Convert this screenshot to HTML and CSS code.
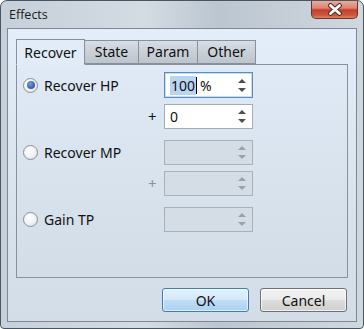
FILE: index.html
```html
<!DOCTYPE html>
<html lang="en">
<head>
  <meta charset="UTF-8">
  <title>Effects</title>
  <link rel="stylesheet" href="styles.css">
</head>
<body>
  <div class="window">
    <div class="titlebar">
      <span class="title">Effects</span>
      <div class="close-btn">
        <svg width="22" height="13" viewBox="0 0 22 13">
          <path d="M6.5 2.5 L15.5 10.5 M15.5 2.5 L6.5 10.5" stroke="#5a2a22" stroke-width="4.8" stroke-linecap="round"/>
          <path d="M6.5 2.5 L15.5 10.5 M15.5 2.5 L6.5 10.5" stroke="#ffffff" stroke-width="2.8" stroke-linecap="round"/>
        </svg>
      </div>
    </div>
    <div class="client">
      <div class="tabs">
        <div class="tab active tab-recover">Recover</div>
        <div class="tab tab-state">State</div>
        <div class="tab tab-param">Param</div>
        <div class="tab tab-other">Other</div>
      </div>
      <div class="panel">
        <div class="row">
          <label class="radio-label"><span class="radio checked"></span>Recover HP</label>
          <span class="plus"></span>
          <div class="spin focused">
            <span class="value"><span class="sel">100</span><span class="caret"></span> %</span>
            <span class="arrows"><i class="up"></i><i class="down"></i></span>
          </div>
        </div>
        <div class="row sub">
          <span class="radio-label"></span>
          <span class="plus">+</span>
          <div class="spin">
            <span class="value">0</span>
            <span class="arrows"><i class="up"></i><i class="down"></i></span>
          </div>
        </div>
        <div class="row gap">
          <label class="radio-label"><span class="radio"></span>Recover MP</label>
          <span class="plus"></span>
          <div class="spin disabled">
            <span class="value"></span>
            <span class="arrows"><i class="up"></i><i class="down"></i></span>
          </div>
        </div>
        <div class="row sub">
          <span class="radio-label"></span>
          <span class="plus dim">+</span>
          <div class="spin disabled">
            <span class="value"></span>
            <span class="arrows"><i class="up"></i><i class="down"></i></span>
          </div>
        </div>
        <div class="row gap">
          <label class="radio-label"><span class="radio"></span>Gain TP</label>
          <span class="plus"></span>
          <div class="spin disabled">
            <span class="value"></span>
            <span class="arrows"><i class="up"></i><i class="down"></i></span>
          </div>
        </div>
      </div>
      <div class="buttons">
        <button class="btn default">OK</button>
        <button class="btn">Cancel</button>
      </div>
    </div>
  </div>
</body>
</html>
```
FILE: styles.css
```css
html, body {
  margin: 0;
  padding: 0;
  background: #ffffff;
}
.window {
  box-sizing: border-box;
  width: 364px;
  height: 329px;
  border: 1px solid #4a5562;
  border-radius: 7px 7px 4px 4px;
  background: linear-gradient(90deg, #c6d0da 0%, #d3dbe3 40%, #bcc6d0 60%, #cfd7df 100%);
  display: flex;
  flex-direction: column;
  font-family: "Noto Sans", "Open Sans", sans-serif;
  color: #111;
  overflow: hidden;
}
.titlebar {
  height: 27px;
  display: flex;
  align-items: flex-start;
  justify-content: space-between;
}
.title {
  font-family: "Open Sans", "Noto Sans", sans-serif;
  font-size: 12.5px;
  margin: 5px 0 0 8px;
  color: #1a1a1a;
}
.close-btn {
  width: 47px;
  height: 19px;
  margin-right: 5px;
  margin-top: -1px;
  box-sizing: border-box;
  border: 1px solid #6e3328;
  border-top: none;
  border-radius: 0 0 5px 5px;
  background: linear-gradient(180deg, #eab2a3 0%, #dc8470 45%, #c43f28 55%, #cd5840 85%, #de8569 100%);
  display: flex;
  align-items: center;
  justify-content: center;
}
.client {
  flex: 1;
  margin: 0 6px 6px 6px;
  border: 1px solid #7d8894;
  background: linear-gradient(180deg, #e4eefa 0%, #dce6f1 40%, #d3dde8 100%);
  padding: 9px 8px 0 8px;
  display: flex;
  flex-direction: column;
}
.tabs {
  display: flex;
  align-items: flex-end;
  height: 26px;
  position: relative;
  z-index: 1;
}
.tab {
  box-sizing: border-box;
  height: 24px;
  padding: 0;
  text-align: center;
  font-size: 14px;
  line-height: 22px;
  border: 1px solid #8a9099;
  border-left: none;
  background: linear-gradient(180deg, #d7dde4 0%, #c9d0d8 50%, #bcc4cd 100%);
  color: #111;
}
.tab.active {
  height: 26px;
  border-left: 1px solid #8a9099;
  border-bottom: 1px solid #e2ecf8;
  background: #e2ecf8;
  padding-top: 2px;
  margin-bottom: -1px;
}
.tab-recover { width: 69px; }
.tab-state { width: 54px; }
.tab-param { width: 59px; }
.tab-other { width: 58px; }
.panel {
  box-sizing: border-box;
  height: 214px;
  flex-shrink: 0;
  border: 1px solid #8a9099;
  background: linear-gradient(180deg, #e0eaf6 0%, #d8e2ed 60%, #d3dde8 100%);
  padding: 7px 0 0 6px;
  display: flex;
  flex-direction: column;
}
.row {
  display: flex;
  align-items: center;
  height: 26px;
}
.row.sub {
  margin-top: 5px;
}
.row.gap {
  margin-top: 10px;
}
.radio-label {
  width: 125px;
  display: flex;
  align-items: center;
  font-size: 14px;
}
.radio {
  box-sizing: border-box;
  width: 15px;
  height: 15px;
  border-radius: 50%;
  border: 1px solid #8c8f94;
  background: radial-gradient(circle at 40% 35%, #ffffff 0%, #f0f2f5 50%, #d6dbe1 100%);
  margin-right: 6px;
  display: flex;
  align-items: center;
  justify-content: center;
}
.radio.checked::after {
  content: "";
  width: 8px;
  height: 8px;
  border-radius: 50%;
  background: radial-gradient(circle at 40% 35%, #7b9ee0 0%, #3a63b8 60%, #2b4f9c 100%);
}
.plus {
  width: 16px;
  font-size: 15px;
  text-align: left;
  color: #111;
}
.plus.dim {
  color: #8a929b;
}
.spin {
  box-sizing: border-box;
  width: 89px;
  height: 25px;
  border: 1px solid #a5abb3;
  background: #ffffff;
  display: flex;
  align-items: center;
  justify-content: space-between;
  padding: 0 4px 0 5px;
  font-size: 14px;
}
.spin.focused {
  height: 26px;
  border: 1px solid #5b8cc0;
  box-shadow: inset 0 0 0 1px #c6dcf2;
}
.spin.disabled {
  background: #d4dce5;
  border-color: #a9b0b8;
}
.value {
  display: flex;
  align-items: center;
}
.sel {
  background: #b9d5f2;
  color: #111;
  padding: 0 1px;
}
.caret {
  width: 1px;
  height: 17px;
  background: #000;
  margin-right: 3px;
}
.arrows {
  display: flex;
  flex-direction: column;
  gap: 5px;
  margin-right: 2px;
}
.arrows i {
  width: 0;
  height: 0;
  border-left: 4px solid transparent;
  border-right: 4px solid transparent;
}
.arrows .up {
  border-bottom: 4px solid #4b5058;
}
.arrows .down {
  border-top: 4px solid #4b5058;
}
.disabled .arrows .up {
  border-bottom-color: #9aa2ab;
}
.disabled .arrows .down {
  border-top-color: #9aa2ab;
}
.buttons {
  display: flex;
  justify-content: flex-end;
  gap: 11px;
  margin-top: 10px;
  padding-right: 1px;
}
.btn {
  box-sizing: border-box;
  width: 87px;
  height: 24px;
  border: 1px solid #707070;
  border-radius: 3px;
  background: linear-gradient(180deg, #f2f2f2 0%, #ebebeb 48%, #dddddd 52%, #cfcfcf 100%);
  font-family: "Noto Sans", "Open Sans", sans-serif;
  font-size: 14px;
  color: #111;
  padding: 0;
  box-shadow: inset 0 0 0 1px rgba(255,255,255,0.7);
}
.btn.default {
  border-color: #3c7fb1;
  background: linear-gradient(180deg, #e3f1fc 0%, #d3e9fb 48%, #bedcf6 52%, #aed1f0 100%);
  box-shadow: inset 0 0 0 1px rgba(255,255,255,0.6);
}
```
